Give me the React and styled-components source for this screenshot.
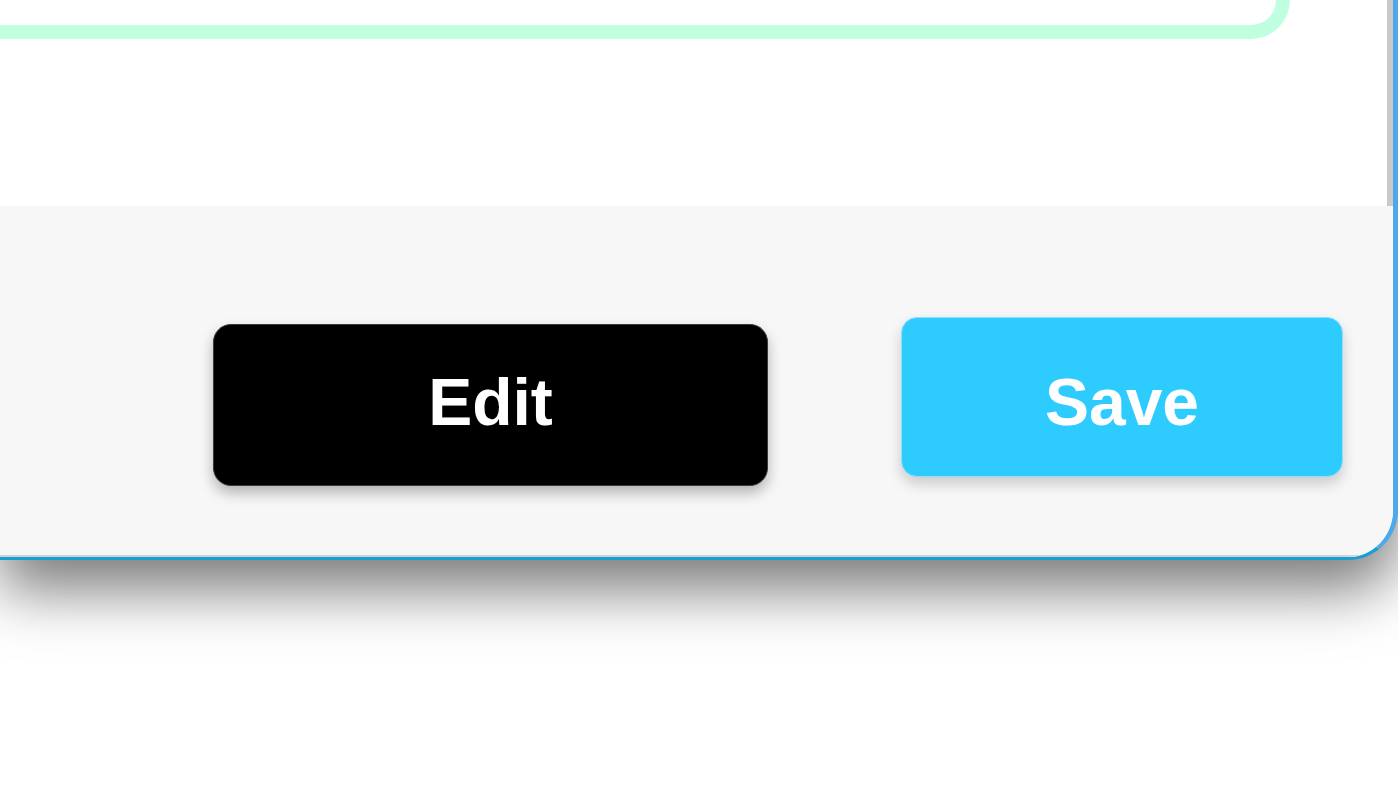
import React from 'react';
import styled, { createGlobalStyle } from 'styled-components';

const GlobalStyle = createGlobalStyle`
    html, body {
        margin: 0;
        padding: 0;
        background: #ffffff;
        font-family: "Liberation Sans", Arial, Helvetica, sans-serif;
    }
`

const Page = styled.div`
    width: 1398px;
    height: 796px;
    overflow: hidden;
    background: #ffffff;
`

const Modal = styled.div`
    display: flex;
    flex-direction: column;
    width: 100%;
    box-sizing: border-box;
    background: #ffffff;
    border-right: 5px solid #4ea9ec;
    border-bottom: 3px solid #1a9fd3;
    border-bottom-right-radius: 50px;
    overflow: hidden;
    box-shadow: 0 30px 60px rgba(0, 0, 0, 0.52);
`

const Body = styled.div`
    display: flex;
    height: 206px;
`

const Content = styled.div`
    flex: 1;
    padding-right: 97px;
`

const Scrollbar = styled.div`
    width: 6px;
    background: #c9c9c9;
`

const Preview = styled.div`
    height: 25px;
    border-right: 14px solid #bfffe0;
    border-bottom: 14px solid #bfffe0;
    border-bottom-right-radius: 40px;
`

const Footer = styled.div`
    display: flex;
    justify-content: flex-end;
    align-items: flex-start;
    height: 351px;
    box-sizing: border-box;
    padding: 111px 50px 0 0;
    gap: 133px;
    background: #f7f7f7;
    border-bottom: 2px solid #d2d2d2;
`

const Button = styled.button`
    display: flex;
    align-items: center;
    justify-content: center;
    width: ${p => p.$width}px;
    height: ${p => p.$height}px;
    margin-top: ${p => p.$offset || 0}px;
    padding: ${p => p.$lift > 0 ? `0 0 ${p.$lift}px` : `${-p.$lift}px 0 0`};
    box-sizing: border-box;
    border: 1px solid ${p => p.$edge};
    border-radius: ${p => p.$radius}px;
    background: ${p => p.$bg};
    color: #ffffff;
    font-family: "Liberation Sans", Arial, Helvetica, sans-serif;
    font-weight: 700;
    font-size: 66px;
    box-shadow: 0 7px 14px rgba(0, 0, 0, ${p => p.$shade});
    cursor: pointer;
`

export default function App() {
    return (
        <Page>
            <GlobalStyle />
            <Modal>
                <Body>
                    <Content>
                        <Preview />
                    </Content>
                    <Scrollbar />
                </Body>
                <Footer>
                    <Button $width={555} $height={162} $offset={7} $lift={6} $radius={18} $bg="#000000" $edge="#3a3a3a" $shade={0.28}>
                        Edit
                    </Button>
                    <Button $width={442} $height={160} $lift={-9} $radius={16} $bg="#2ecbff" $edge="#8fdfff" $shade={0.18}>
                        Save
                    </Button>
                </Footer>
            </Modal>
        </Page>
    )
}
